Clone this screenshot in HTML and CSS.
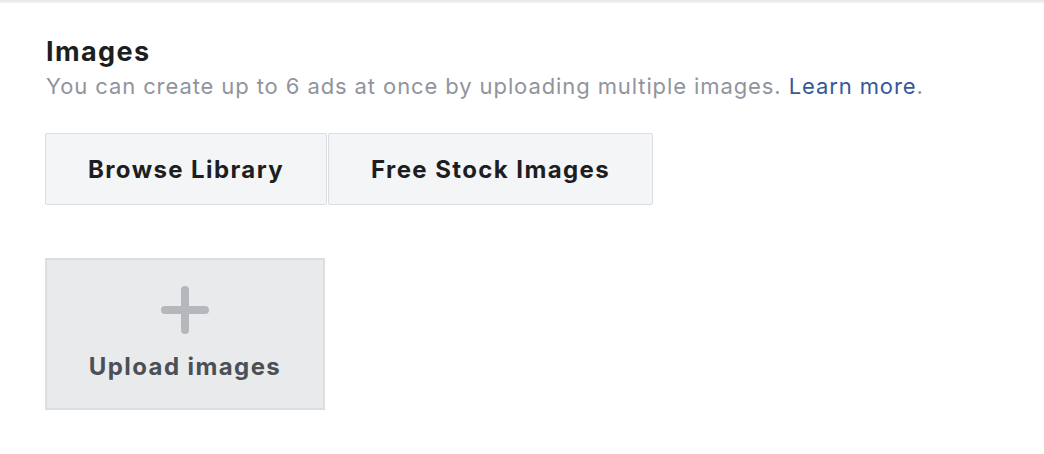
FILE: index.html
```html
<!DOCTYPE html>
<html>
<head>
<meta charset="utf-8">
<link rel="stylesheet" href="styles.css">
</head>
<body>
<div class="topline"></div>
<section class="panel">
  <h2 class="title">Images</h2>
  <p class="desc">You can create up to 6 ads at once by uploading multiple images. <a class="link" href="#">Learn more</a>.</p>
  <div class="btn-row">
    <button class="btn">Browse Library</button>
    <button class="btn">Free Stock Images</button>
  </div>
  <div class="upload">
    <svg class="plus" width="48" height="48" viewBox="0 0 48 48">
      <path d="M24 4 V44 M4 24 H44" stroke="#b4b7bc" stroke-width="8" stroke-linecap="round" fill="none"/>
    </svg>
    <span class="upload-label">Upload images</span>
  </div>
</section>
</body>
</html>
```
FILE: styles.css
```css
* { box-sizing: border-box; }
html, body { margin: 0; padding: 0; background: #ffffff; }
body { font-family: Inter, "Liberation Sans", Arial, sans-serif; }
.topline { height: 3px; background: linear-gradient(#e6e6e6, #f4f4f4); }
.panel { padding: 33px 0 0 45px; }
.title {
  margin: 0;
  font-size: 27px;
  line-height: 32px;
  font-weight: 700;
  letter-spacing: 1.4px;
  color: #1c1e21;
  padding-left: 1px;
}
.desc {
  margin: 2px 0 0;
  font-size: 22px;
  line-height: 32px;
  letter-spacing: 0.9px;
  color: #90949c;
  padding-left: 1px;
}
.link { color: #365899; text-decoration: none; }
.btn-row { display: flex; gap: 1px; margin-top: 31px; }
.btn {
  height: 72px;
  padding: 0 42px;
  background: #f4f5f6;
  border: 1px solid #dadde1;
  border-radius: 2px;
  font-family: inherit;
  font-size: 24px;
  font-weight: 700;
  letter-spacing: 1.4px;
  color: #1c1e21;
}
.upload {
  margin-top: 53px;
  width: 280px;
  height: 152px;
  background: #e9eaec;
  border: 2px solid #dcdee2;
  display: flex;
  flex-direction: column;
  align-items: center;
  padding-top: 26px;
}
.plus { display: block; }
.upload-label {
  margin-top: 18px;
  font-size: 24px;
  line-height: 29px;
  font-weight: 700;
  letter-spacing: 1.4px;
  color: #4b4f56;
}
```
